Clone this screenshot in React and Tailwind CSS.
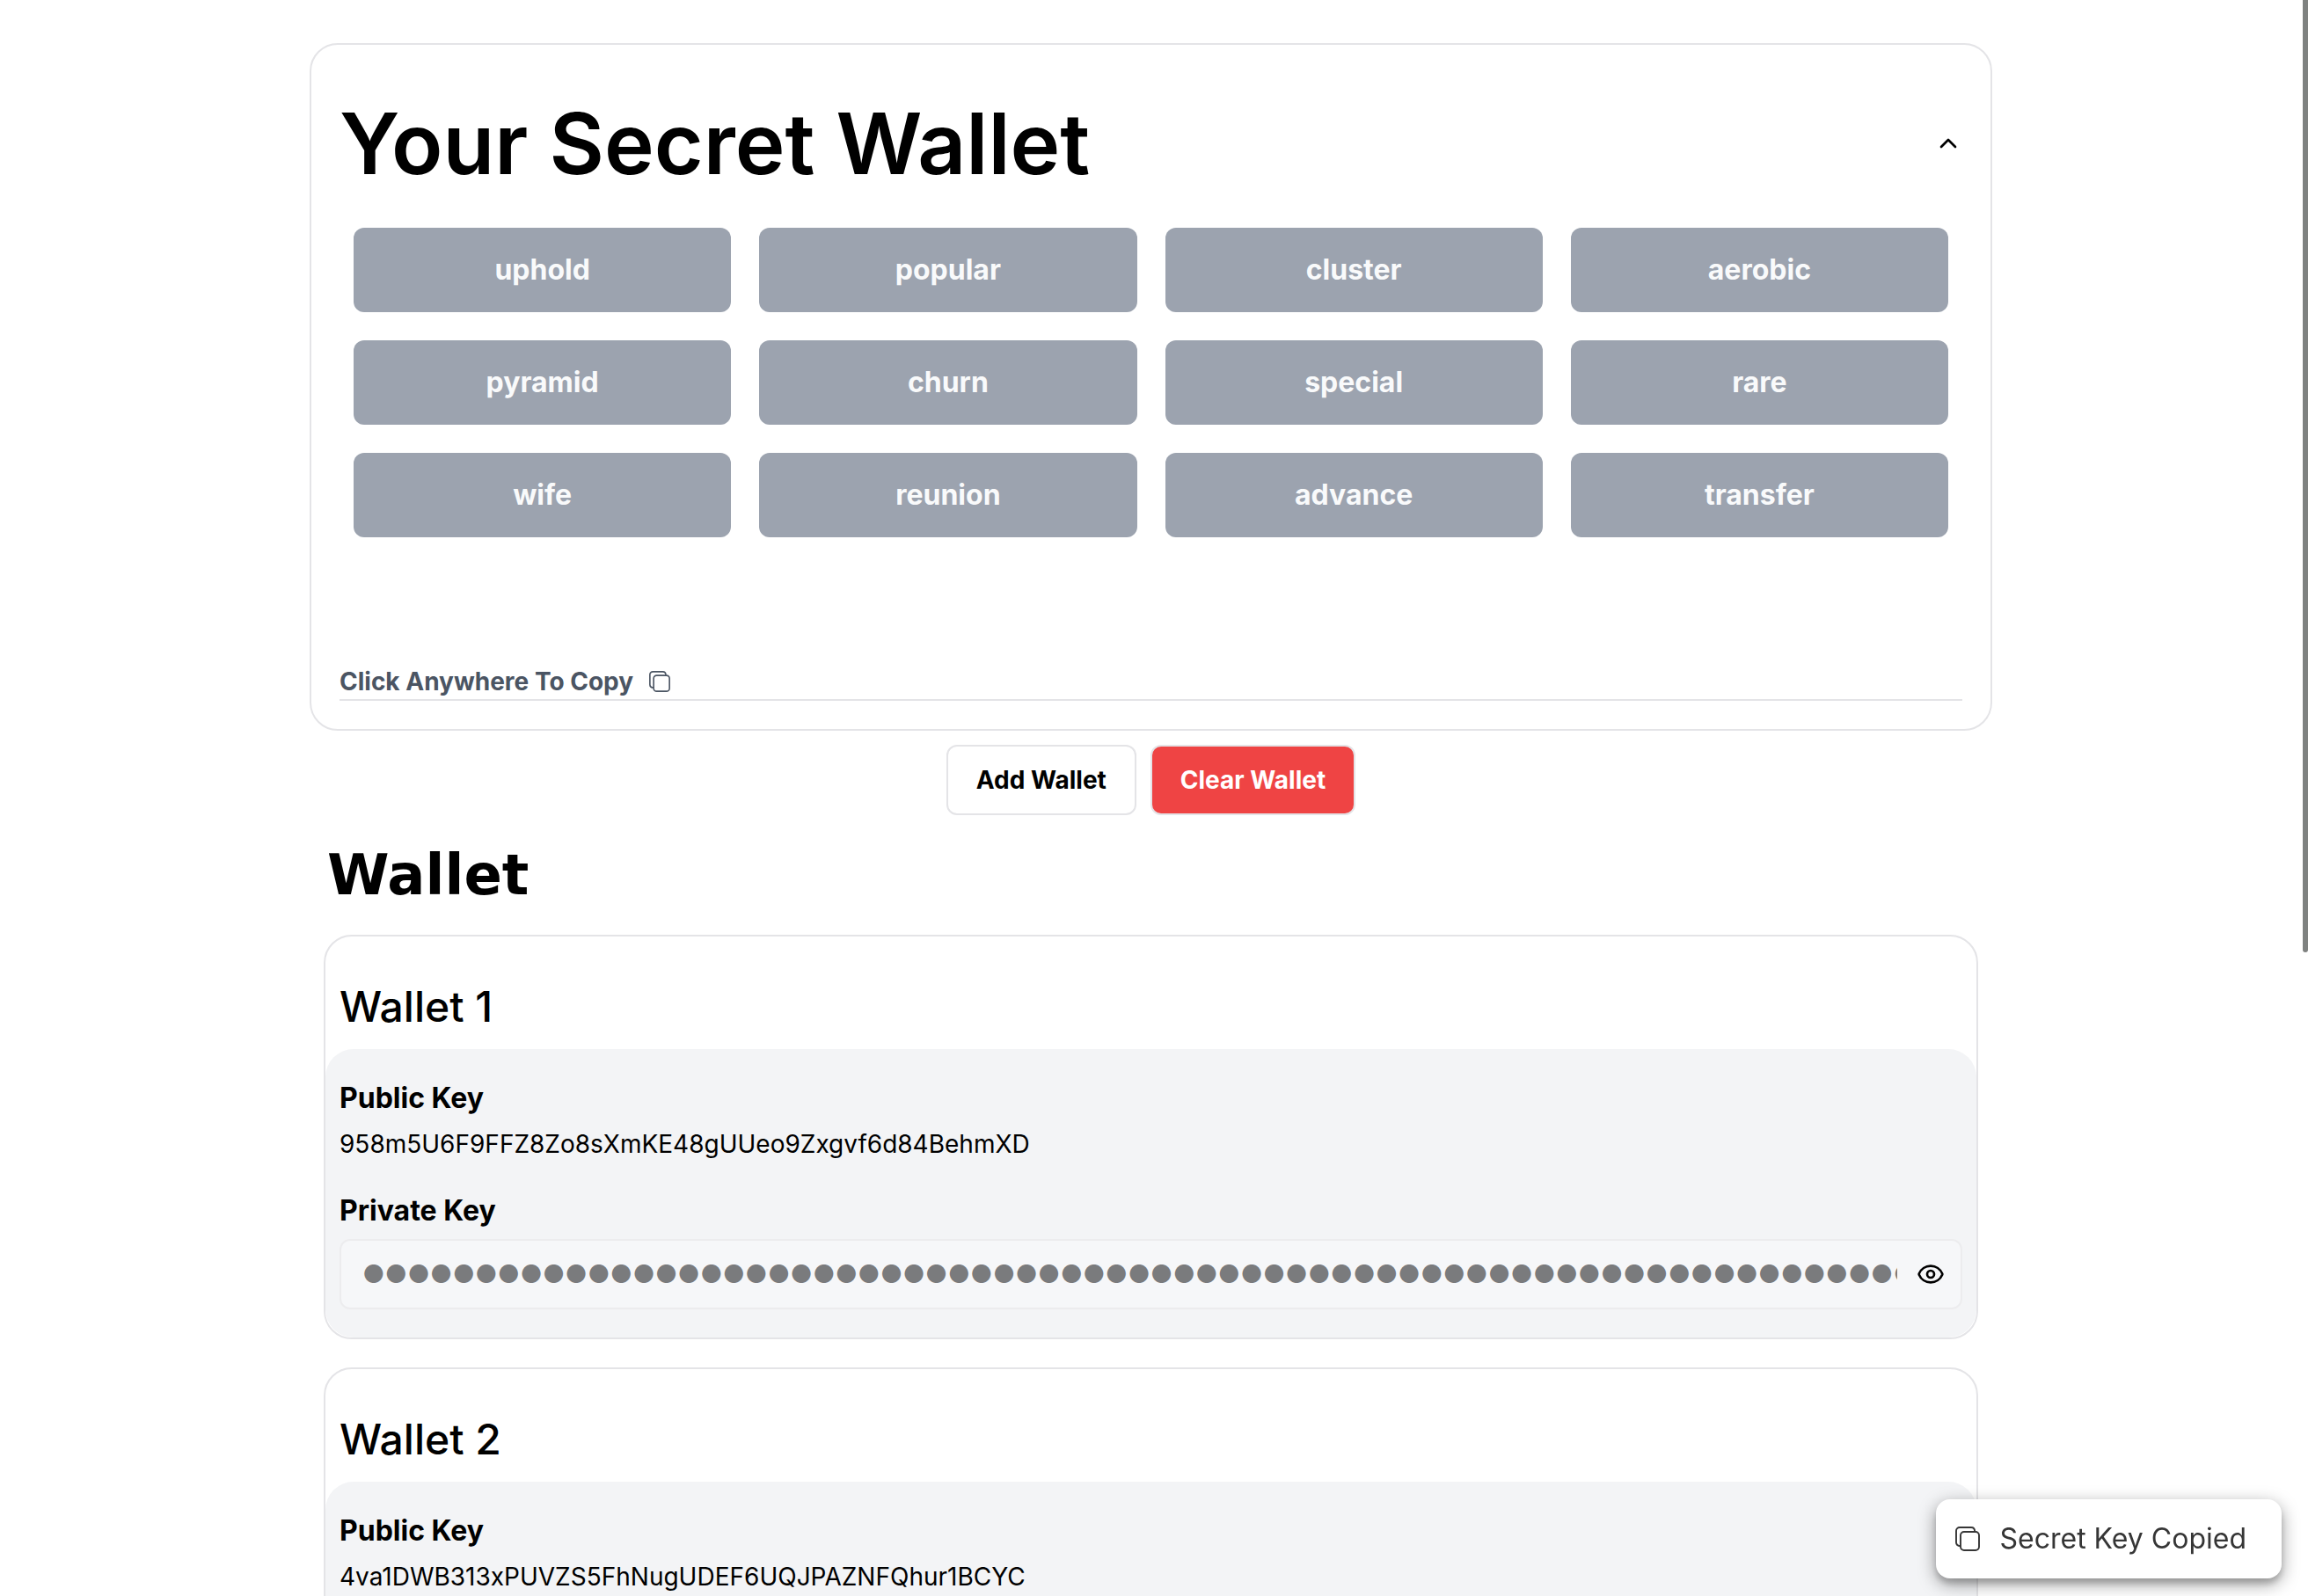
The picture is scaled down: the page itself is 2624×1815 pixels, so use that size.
import { Eye, ChevronUp } from "lucide-react";

const WORDS = [
  "uphold", "popular", "cluster", "aerobic",
  "pyramid", "churn", "special", "rare",
  "wife", "reunion", "advance", "transfer",
];

const WALLETS = [
  { id: 1, publicKey: "958m5U6F9FFZ8Zo8sXmKE48gUUeo9Zxgvf6d84BehmXD" },
  { id: 2, publicKey: "4va1DWB313xPUVZS5FhNugUDEF6UQJPAZNFQhur1BCYC" },
];

const MASKED_KEY = "●".repeat(88);

function CopyIcon({ className }) {
  return (
    <svg
      viewBox="0 0 28 28"
      fill="none"
      stroke="currentColor"
      strokeWidth="1.9"
      strokeLinejoin="round"
      aria-hidden="true"
      className={className}
    >
      <rect x="6" y="6" width="21" height="21" rx="4" />
      <path d="M6 22.2C3 22.2 1 20.500 1 18V5a4 4 0 0 1 4-4h13c2.500 0 4.200 2 4.200 5" />
    </svg>
  );
}

function WalletCard({ id, publicKey }) {
  return (
    <article className="rounded-[32px] border-2 border-[#e4e4e7] pt-12">
      <h3 className="px-4 pb-4 text-[48px] leading-16 font-medium">Wallet {id}</h3>
      <div className="flex flex-col gap-8 rounded-[32px] bg-[#f3f4f6] px-4 py-8">
        <div className="flex flex-col gap-2">
          <h4 className="text-[32px] leading-12 font-bold">Public Key</h4>
          <p className="text-[28px] leading-10">{publicKey}</p>
        </div>
        <div className="flex flex-col gap-2">
          <label htmlFor={`private-${id}`} className="text-[32px] leading-12 font-bold">
            Private Key
          </label>
          <div className="flex h-20 items-center rounded-xl border-2 border-[#ececee] bg-[#f6f7f9] pr-4.5 pl-6">
            <input
              id={`private-${id}`}
              type="text"
              readOnly
              value={MASKED_KEY}
              className="min-w-0 flex-1 bg-transparent text-[28px] text-[#7a7b7d] outline-none"
            />
            <button type="button" aria-label="Show private key" className="ml-5.5">
              <Eye className="size-8" strokeWidth={2} />
            </button>
          </div>
        </div>
      </div>
    </article>
  );
}

export default function App() {
  return (
    <div className="flex h-screen overflow-hidden bg-white font-['Inter',sans-serif] text-black">
      <main className="min-w-0 flex-1 px-88 pt-[49px]">
        <section className="rounded-[32px] border-2 border-[#e4e4e7] px-8 pt-16 pb-8">
          <div className="flex items-center justify-between">
            <h1 className="text-[96px] leading-24 font-semibold">Your Secret Wallet</h1>
            <button type="button" aria-label="Collapse secret wallet">
              <ChevronUp className="size-8" />
            </button>
          </div>
          <div className="mt-12 grid grid-cols-4 gap-8 px-4">
            {WORDS.map((word) => (
              <div
                key={word}
                className="flex h-24 items-center justify-center rounded-xl bg-[#9ca3af] text-[32px] leading-12 font-bold text-[#f9fafb]"
              >
                {word}
              </div>
            ))}
          </div>
          <button
            type="button"
            className="mt-36 flex w-full items-center gap-4.5 border-b-2 border-[#e4e4e7] text-[28px] leading-10 font-bold text-[#4b5563]"
          >
            Click Anywhere To Copy
            <CopyIcon className="size-6" />
          </button>
        </section>

        <div className="mt-4 flex justify-center gap-4 text-[28px] font-bold">
          <button type="button" className="h-20 rounded-xl border-2 border-[#e4e4e7] px-8">
            Add Wallet
          </button>
          <button type="button" className="h-20 rounded-xl border-2 border-[#e4e4e7] bg-[#ef4444] px-8 text-white">
            Clear Wallet
          </button>
        </div>

        <section className="px-4">
          <h2 className="px-1 py-8 font-['DejaVu_Sans',sans-serif] text-[64px] leading-18 font-bold">Wallet</h2>
          <div className="flex flex-col gap-8">
            {WALLETS.map((wallet) => (
              <WalletCard key={wallet.id} {...wallet} />
            ))}
          </div>
        </section>
      </main>

      <div aria-hidden="true" className="w-[7px] shrink-0 pl-px">
        <div className="h-[1083px] rounded-b-full bg-[#7f8280]" />
      </div>

      <div
        role="status"
        className="fixed right-7.5 bottom-5 flex items-center gap-5.5 rounded-2xl bg-white py-[21px] pr-10 pl-5.5 text-[32px] leading-12 text-[#363636] shadow-[0_6px_20px_rgba(0,0,0,0.4),0_6px_6px_rgba(0,0,0,0.15)]"
      >
        <CopyIcon className="size-7" />
        Secret Key Copied
      </div>
    </div>
  );
}
